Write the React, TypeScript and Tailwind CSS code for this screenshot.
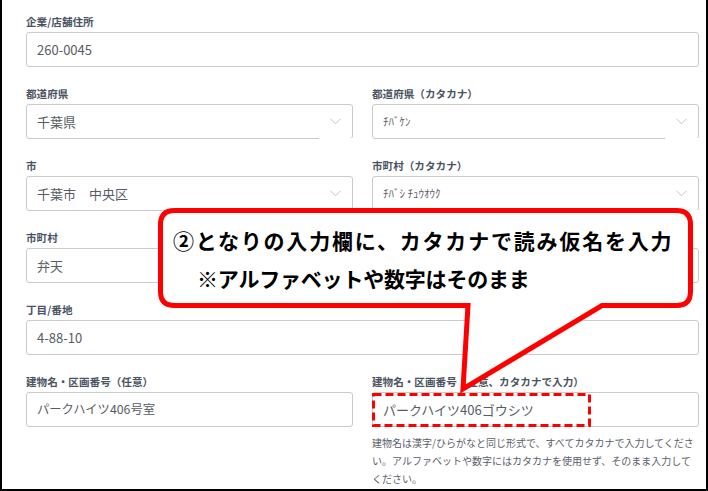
import React from "react";

const FONT = { fontFamily: '"Noto Sans CJK JP", "Noto Sans", sans-serif' };

function Chevron() {
  return (
    <svg width="11" height="7" viewBox="0 0 11 7" className="shrink-0">
      <polyline points="0.5,0.8 5.5,5.8 10.5,0.8" fill="none" stroke="#c4c4c4" strokeWidth="1" />
    </svg>
  );
}

function Field({
  label,
  value,
  select,
  full,
  size = "text-[13px]",
}: {
  label: string;
  value: string;
  select?: boolean;
  full?: boolean;
  size?: string;
}) {
  return (
    <div className={full ? "col-span-2" : ""}>
      <div className="h-[14px] leading-[14px] text-[10.6px] font-bold text-[#4b5362] whitespace-nowrap mb-[3px]">
        {label}
      </div>
      <div className="relative h-[35px] border border-[#cacaca] rounded-[3px] pl-[10px] pr-[11px] flex items-center justify-between bg-white">
        <span className={`${size} text-[#575c63] whitespace-pre`}>{value}</span>
        {select && <Chevron />}
        {select && <div className="absolute right-[-1px] bottom-[-1px] w-[34px] h-[1px] bg-white" />}
      </div>
    </div>
  );
}

export default function App() {
  return (
    <div
      className="relative w-[708px] h-[491px] overflow-hidden bg-white border-l-2 border-r-2 border-b-2 border-black"
      style={FONT}
    >
      <div className="pl-[24px] pt-[15px]">
        <div className="grid grid-cols-2 w-[673px] gap-x-[19px] gap-y-[20px]">
          <Field full label="企業/店舗住所" value="260-0045" />
          <Field select label="都道府県" value="千葉県" />
          <Field select label="都道府県（カタカナ）" value="ﾁﾊﾞｹﾝ" size="text-[11px]" />
          <Field select label="市" value="千葉市　中央区" />
          <Field select label="市町村（カタカナ）" value="ﾁﾊﾞｼ ﾁｭｳｵｳｸ" size="text-[11px]" />
          <Field label="市町村" value="弁天" />
          <Field label="" value="" />
          <Field full label="丁目/番地" value="4-88-10" />
          <div>
            <Field label="建物名・区画番号（任意）" value="パークハイツ406号室" size="text-[12.3px]" />
          </div>
          <div>
            <Field label="建物名・区画番号（任意、カタカナで入力）" value="パークハイツ406ゴウシツ" />
            <div className="mt-[7px] text-[10px] leading-[18px] text-[#5a606a] whitespace-nowrap">
              <div>建物名は漢字/ひらがなと同じ形式で、すべてカタカナで入力してくださ</div>
              <div>い。アルファベットや数字にはカタカナを使用せず、そのまま入力して</div>
              <div>ください。</div>
            </div>
          </div>
        </div>
      </div>

      {/* annotation overlay */}
      <svg
        className="absolute left-[-2px] top-0 pointer-events-none"
        width="708"
        height="491"
        viewBox="0 0 708 491"
      >
        <rect
          x="373.5"
          y="394.5"
          width="216"
          height="31"
          fill="none"
          stroke="#ff0000"
          strokeWidth="3"
          strokeDasharray="8 4"
        />
        <path
          d="M 174.5 210.5 H 676.5 Q 690.5 210.5 690.5 224.5 V 291.5 Q 690.5 305.5 676.5 305.5 H 602 L 463 389 L 468 305.5 H 174.5 Q 160.5 305.5 160.5 291.5 V 224.5 Q 160.5 210.5 174.5 210.5 Z"
          fill="#ffffff"
          stroke="#ff0000"
          strokeWidth="5"
          strokeLinejoin="miter"
        />
      </svg>
      <div className="absolute left-[171px] top-[226px] text-[21px] leading-[28px] font-bold text-black whitespace-nowrap tracking-[1.8px]">
        ②となりの入力欄に、カタカナで読み仮名を入力
      </div>
      <div className="absolute left-[195px] top-[264px] text-[21px] leading-[28px] font-bold text-black whitespace-nowrap tracking-[-0.2px]">
        ※アルファベットや数字はそのまま
      </div>
    </div>
  );
}
